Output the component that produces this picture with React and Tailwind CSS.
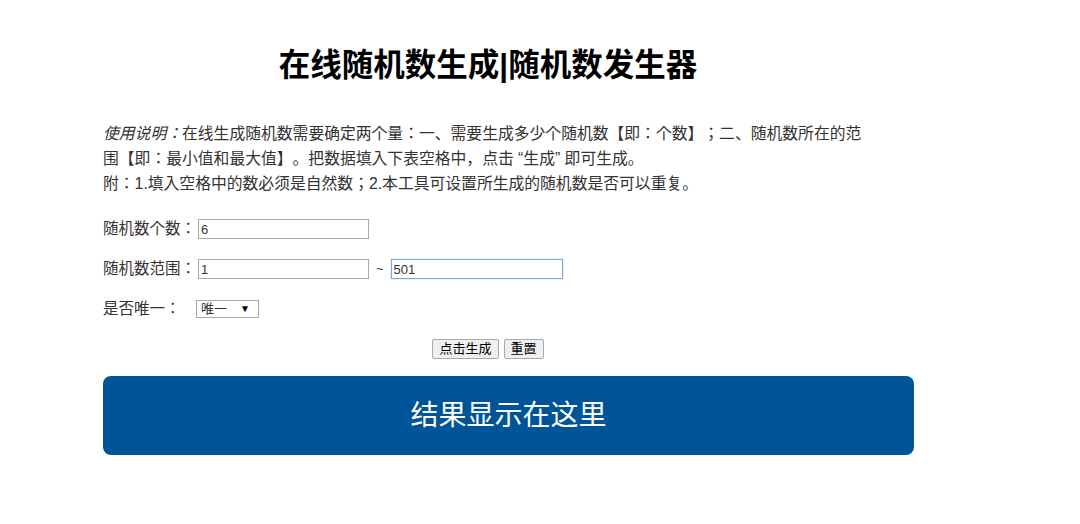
import React, { useState } from "react";

const font = { fontFamily: '"Liberation Sans", "Noto Sans CJK SC", sans-serif' };

export default function App() {
  const [count, setCount] = useState("6");
  const [min, setMin] = useState("1");
  const [max, setMax] = useState("501");
  const [unique, setUnique] = useState("1");

  return (
    <div className="w-[1080px] h-[524px] bg-white text-[#333] [text-spacing-trim:space-all] font-['Liberation_Sans','Noto_Sans_CJK_JP',sans-serif]">
      <div className="w-[770px] ml-[103px] pt-[40px]">
        <h1 className="text-center text-[31.5px] leading-[50px] font-bold text-black font-['Liberation_Sans','Noto_Sans_CJK_SC',sans-serif]">
          在线随机数生成|随机数发生器
        </h1>

        <p className="mt-[31px] text-[15.8px] leading-[25px] whitespace-nowrap">
          <em>使用说明：</em>在线生成随机数需要确定两个量：一、需要生成多少个随机数【即：个数】；二、随机数所在的范
          <br />
          围【即：最小值和最大值】。把数据填入下表空格中，点击 “生成” 即可生成。
          <br />
          附：1.填入空格中的数必须是自然数；2.本工具可设置所生成的随机数是否可以重复。
        </p>

        <div className="mt-[23px] flex flex-col gap-[20px] text-[15.5px]">
          <div className="flex items-center h-[20px]">
            <span className="w-[95px]">随机数个数：</span>
            <input
              value={count}
              onChange={(e) => setCount(e.target.value)}
              className="w-[171px] h-[20px] border border-[#a9a9a9] px-[2px] text-[13px] outline-none"
            />
          </div>
          <div className="flex items-center h-[20px]">
            <span className="w-[95px]">随机数范围：</span>
            <input
              value={min}
              onChange={(e) => setMin(e.target.value)}
              className="w-[171px] h-[20px] border border-[#a9a9a9] px-[2px] text-[13px] outline-none"
            />
            <span className="mx-[7px] text-[13px]">~</span>
            <input
              value={max}
              onChange={(e) => setMax(e.target.value)}
              className="w-[172px] h-[20px] border border-[#7ea6e0] shadow-[0_0_1px_#7ea6e0] px-[2px] text-[13px] outline-none"
            />
          </div>
          <div className="flex items-center h-[20px]">
            <span className="w-[93px]">是否唯一：</span>
            <div className="relative w-[63px] h-[18px] border border-[#a9a9a9] bg-white">
              <select
                value={unique}
                onChange={(e) => setUnique(e.target.value)}
                className="appearance-none block w-full h-[16px] bg-transparent pl-[4px] text-[13px] leading-[16px] py-0 outline-none"
              >
                <option value="1">唯一</option>
                <option value="0">可重复</option>
              </select>
              <span className="pointer-events-none absolute right-[8px] top-[1px] text-[10px] leading-[14px] text-black">▼</span>
            </div>
          </div>
        </div>

        <div className="mt-[20px] flex justify-center gap-[5px]">
          <button className="h-[20px] px-[6px] text-[13px] leading-[18px] text-black bg-[#efefef] border border-[#a9a9a9] rounded-[2px]">点击生成</button>
          <button className="h-[20px] px-[6px] text-[13px] leading-[18px] text-black bg-[#efefef] border border-[#a9a9a9] rounded-[2px]">重置</button>
        </div>
      </div>

      <div className="ml-[103px] mt-[17px] w-[811px] h-[79px] rounded-[8px] bg-[#005498] flex items-center justify-center">
        <span className="text-white text-[28px]" style={font}>结果显示在这里</span>
      </div>
    </div>
  );
}
